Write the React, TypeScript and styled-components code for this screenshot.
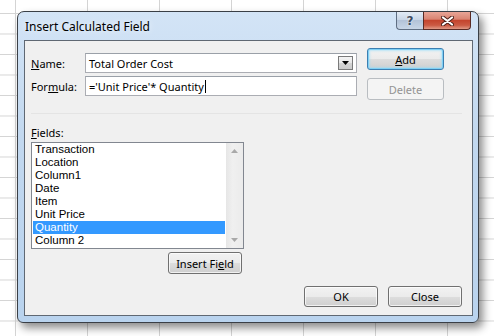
import React from 'react';
import styled, { createGlobalStyle } from 'styled-components';

const GlobalStyle = createGlobalStyle`
  html, body {
    margin: 0;
    padding: 0;
  }
  body {
    font-family: 'Segoe UI', 'Noto Sans', 'DejaVu Sans', sans-serif;
    font-size: 11px;
    color: #000;
  }
`;

const FIELDS = [
  'Transaction',
  'Location',
  'Column1',
  'Date',
  'Item',
  'Unit Price',
  'Quantity',
  'Column 2',
];

const SELECTED = 'Quantity';

const App = () => {
  return (
    <Sheet>
      <GlobalStyle />
      <Dialog>
        <TitleBar>
          <Title>Insert Calculated Field</Title>
          <CaptionButtons>
            <HelpButton>?</HelpButton>
            <CloseButton>
              <svg width="13" height="10" viewBox="0 0 13 10">
                <path d="M2 1.5 L11 8.5 M11 1.5 L2 8.5" stroke="#4a1f17" strokeWidth="4" strokeLinecap="round" />
                <path d="M2 1.5 L11 8.5 M11 1.5 L2 8.5" stroke="#fff" strokeWidth="2.2" strokeLinecap="round" />
              </svg>
            </CloseButton>
          </CaptionButtons>
        </TitleBar>
        <Client>
          <Top>
            <Form>
              <Label><u>N</u>ame:</Label>
              <Combo>
                <FieldText>Total Order Cost</FieldText>
                <DropButton>
                  <svg width="7" height="4" viewBox="0 0 7 4">
                    <path d="M0 0 H7 L3.5 4 Z" fill="#000" />
                  </svg>
                </DropButton>
              </Combo>
              <Label>For<u>m</u>ula:</Label>
              <TextBox>
                <FieldText>='Unit Price'* Quantity</FieldText>
                <Caret />
              </TextBox>
            </Form>
            <SideButtons>
              <Button $default><u>A</u>dd</Button>
              <Button $disabled>Delete</Button>
            </SideButtons>
          </Top>
          <Separator />
          <FieldsBlock>
            <Label><u>F</u>ields:</Label>
            <ListBox>
              <Items>
                {FIELDS.map((f) => (
                  <Item key={f} $selected={f === SELECTED}>{f}</Item>
                ))}
              </Items>
              <ScrollBar>
                <Arrow viewBox="0 0 7 4"><path d="M0 4 H7 L3.5 0 Z" fill="#a9a9a9" /></Arrow>
                <Arrow viewBox="0 0 7 4"><path d="M0 0 H7 L3.5 4 Z" fill="#a9a9a9" /></Arrow>
              </ScrollBar>
            </ListBox>
            <InsertButton>Insert Fi<u>e</u>ld</InsertButton>
          </FieldsBlock>
          <Footer>
            <Button $w={74} $h={21}>OK</Button>
            <Button $w={74} $h={21}>Close</Button>
          </Footer>
        </Client>
      </Dialog>
    </Sheet>
  );
};

export default App;

const Sheet = styled.div`
  width: 494px;
  height: 336px;
  box-sizing: border-box;
  padding: 11px 0 0 17px;
  overflow: hidden;
  background-color: #fff;
  background-image:
    linear-gradient(to right, #d4d4d4 1px, transparent 1px),
    linear-gradient(to bottom, #d4d4d4 1px, transparent 1px);
  background-size: 72px 100%, 100% 20.5px;
  background-position: 15px 0, 0 13px;
`;

const Dialog = styled.div`
  width: 462px;
  height: 312px;
  box-sizing: border-box;
  display: flex;
  flex-direction: column;
  padding: 0 5px 6px 6px;
  border: 1px solid #3a3f46;
  border-radius: 7px 7px 6px 6px;
  background: linear-gradient(to bottom, #d3e4f6 0%, #c2d8ef 40%, #b9d3ee 100%);
  box-shadow: 4px 5px 9px rgba(0, 0, 0, 0.45);
`;

const TitleBar = styled.div`
  height: 28px;
  display: flex;
  align-items: flex-start;
  flex-shrink: 0;
`;

const Title = styled.div`
  align-self: center;
  padding-left: 1px;
  font-size: 12px;
  color: #000;
  text-shadow: 0 0 6px rgba(255, 255, 255, 0.9);
`;

const CaptionButtons = styled.div`
  margin-left: auto;
  margin-right: 2px;
  display: flex;
`;

const HelpButton = styled.div`
  width: 27px;
  height: 18px;
  box-sizing: border-box;
  display: flex;
  align-items: center;
  justify-content: center;
  border: 1px solid #5f6e82;
  border-top: none;
  border-right: none;
  border-radius: 0 0 0 4px;
  background: linear-gradient(to bottom, #e2ebf5 0%, #c9d6e6 45%, #b3c3d8 50%, #c8d6e7 100%);
  color: #3c4b60;
  font-family: 'DejaVu Sans', sans-serif;
  font-size: 12px;
  font-weight: bold;
  text-shadow: 0 0 2px #fff;
`;

const CloseButton = styled.div`
  width: 48px;
  height: 18px;
  box-sizing: border-box;
  display: flex;
  align-items: center;
  justify-content: center;
  border: 1px solid #5a2a24;
  border-top: none;
  border-radius: 0 0 4px 0;
  background: linear-gradient(to bottom, #e8a597 0%, #d98472 42%, #c4452e 50%, #cb5a43 78%, #e09a86 100%);
`;

const Client = styled.div`
  flex: 1;
  display: flex;
  flex-direction: column;
  padding: 7px 10px 8px 6px;
  border: 1px solid #5f6873;
  background: #f0f0f0;
`;

const Top = styled.div`
  display: flex;
  align-items: flex-start;
`;

const Form = styled.div`
  margin-top: 5px;
  display: grid;
  grid-template-columns: 54px 272px;
  grid-auto-rows: 20px;
  row-gap: 3px;
  align-items: center;
`;

const Label = styled.div`
  font-size: 11px;
  line-height: 15px;
  white-space: nowrap;
`;

const TextBox = styled.div`
  height: 20px;
  box-sizing: border-box;
  display: flex;
  align-items: center;
  padding-left: 3px;
  border: 1px solid #abadb3;
  border-top-color: #9aa0a8;
  background: #fff;
`;

const Combo = styled(TextBox)`
  justify-content: space-between;
  padding-right: 3px;
`;

const FieldText = styled.span`
  font-size: 11px;
  white-space: nowrap;
`;

const Caret = styled.span`
  width: 1px;
  height: 13px;
  margin-left: 1px;
  background: #000;
`;

const DropButton = styled.div`
  width: 15px;
  height: 14px;
  box-sizing: border-box;
  display: flex;
  align-items: center;
  justify-content: center;
  border: 1px solid #7a7a7a;
  background: linear-gradient(to bottom, #f4f4f4 0%, #e6e6e6 50%, #d4d4d4 51%, #cbcbcb 100%);
`;

const SideButtons = styled.div`
  margin-left: 10px;
  display: flex;
  flex-direction: column;
  gap: 8px;
`;

const Button = styled.div<{ $default?: boolean; $disabled?: boolean; $w?: number; $h?: number }>`
  width: ${(p) => p.$w ?? 77}px;
  height: ${(p) => p.$h ?? 22}px;
  box-sizing: border-box;
  display: flex;
  align-items: center;
  justify-content: center;
  font-size: 11px;
  border-radius: 3px;
  border: 1px solid ${(p) => (p.$default ? '#3c7fb1' : p.$disabled ? '#b9bdc1' : '#707070')};
  color: ${(p) => (p.$disabled ? '#939393' : '#000')};
  background: ${(p) =>
    p.$disabled
      ? '#f4f4f4'
      : 'linear-gradient(to bottom, #f2f2f2 0%, #ebebeb 50%, #dddddd 51%, #cfcfcf 100%)'};
  box-shadow: ${(p) =>
    p.$default
      ? 'inset 0 0 0 1px #7fd0f5, inset 0 0 2px 2px rgba(150, 220, 250, 0.6)'
      : p.$disabled
      ? 'none'
      : 'inset 0 0 0 1px rgba(255, 255, 255, 0.7)'};
`;

const Separator = styled.div`
  height: 1px;
  margin: 13px 0 0 0;
  background: #e4e4e4;
`;

const FieldsBlock = styled.div`
  width: 213px;
  margin-top: 11px;
  display: flex;
  flex-direction: column;
`;

const ListBox = styled.div`
  height: 107px;
  margin-top: 2px;
  box-sizing: border-box;
  display: flex;
  border: 1px solid #828790;
  background: #fff;
`;

const Items = styled.div`
  flex: 1;
  padding: 0 1px;
`;

const Item = styled.div<{ $selected?: boolean }>`
  height: 13px;
  line-height: 13px;
  padding-left: 2px;
  font-family: 'Liberation Sans', Arial, sans-serif;
  font-size: 11.5px;
  white-space: nowrap;
  background: ${(p) => (p.$selected ? '#3399ff' : 'transparent')};
  color: ${(p) => (p.$selected ? '#fff' : '#000')};
`;

const ScrollBar = styled.div`
  width: 17px;
  display: flex;
  flex-direction: column;
  justify-content: space-between;
  align-items: center;
  padding: 6px 0 6px;
  box-sizing: border-box;
  background: linear-gradient(to right, #e6e6e6, #f0f0f0 40%, #ebebeb);
`;

const Arrow = styled.svg`
  width: 7px;
  height: 4px;
`;

const InsertButton = styled(Button).attrs({ $w: 74, $h: 22 })`
  align-self: flex-end;
  margin: 3px 2px 0 0;
`;

const Footer = styled.div`
  margin-top: auto;
  display: flex;
  justify-content: flex-end;
  gap: 10px;
`;
